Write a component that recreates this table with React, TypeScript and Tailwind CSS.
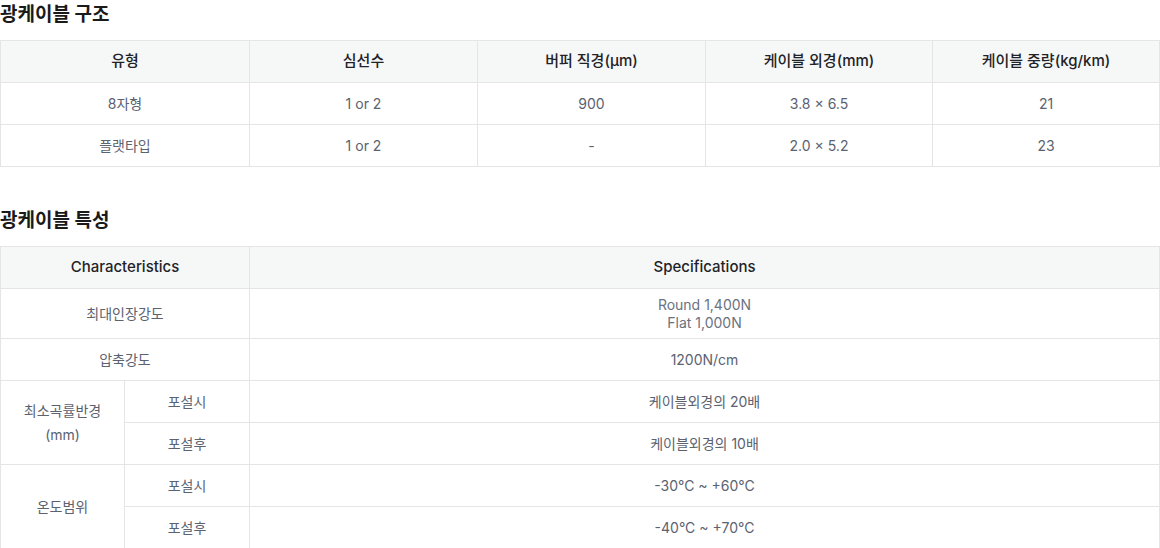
import React from 'react';

const th = 'border border-[#e5e5e5] bg-[#f6f7f7] h-[42px] text-[15px] font-medium text-[#1f2328] text-center';
const td = 'border border-[#e5e5e5] h-[42px] text-[14px] text-[#5b6270] text-center';

const structureRows = [
  ['8자형', '1 or 2', '900', '3.8 × 6.5', '21'],
  ['플랫타입', '1 or 2', '-', '2.0 × 5.2', '23'],
];

export default function App() {
  return (
    <div className="w-[1160px] bg-white" style={{ fontFamily: 'Inter, "Noto Sans CJK KR", sans-serif' }}>
      <h2 className="text-[19px] font-bold leading-[30px] text-[#1a1a1a] mb-[10px]">광케이블 구조</h2>
      <table className="w-full table-fixed border-collapse">
        <colgroup>
          <col className="w-[249px]" />
          <col className="w-[228px]" />
          <col className="w-[228px]" />
          <col className="w-[227px]" />
          <col />
        </colgroup>
        <thead>
          <tr>
            <th className={th}>유형</th>
            <th className={th}>심선수</th>
            <th className={th}>버퍼 직경(μm)</th>
            <th className={th}>케이블 외경(mm)</th>
            <th className={th}>케이블 중량(kg/km)</th>
          </tr>
        </thead>
        <tbody>
          {structureRows.map((row, i) => (
            <tr key={i}>
              {row.map((cell, j) => (
                <td key={j} className={td}>{cell}</td>
              ))}
            </tr>
          ))}
        </tbody>
      </table>

      <h2 className="text-[19px] font-bold leading-[30px] text-[#1a1a1a] mt-[39px] mb-[10px]">광케이블 특성</h2>
      <table className="w-full table-fixed border-collapse">
        <colgroup>
          <col className="w-[124px]" />
          <col className="w-[125px]" />
          <col />
        </colgroup>
        <thead>
          <tr>
            <th colSpan={2} className={th}>Characteristics</th>
            <th className={th}>Specifications</th>
          </tr>
        </thead>
        <tbody>
          <tr>
            <td colSpan={2} className={`${td} h-[50px]`}>최대인장강도</td>
            <td className={`${td} h-[50px] text-[13px] leading-[18px] text-[#6b7280]`}>
              Round 1,400N
              <br />
              Flat 1,000N
            </td>
          </tr>
          <tr>
            <td colSpan={2} className={td}>압축강도</td>
            <td className={td}>1200N/cm</td>
          </tr>
          <tr>
            <td rowSpan={2} className={`${td} leading-[24px]`}>
              최소곡률반경
              <br />
              (mm)
            </td>
            <td className={td}>포설시</td>
            <td className={td}>케이블외경의 20배</td>
          </tr>
          <tr>
            <td className={td}>포설후</td>
            <td className={td}>케이블외경의 10배</td>
          </tr>
          <tr>
            <td rowSpan={2} className={td}>온도범위</td>
            <td className={td}>포설시</td>
            <td className={td}>-30°C ~ +60°C</td>
          </tr>
          <tr>
            <td className={td}>포설후</td>
            <td className={td}>-40°C ~ +70°C</td>
          </tr>
        </tbody>
      </table>
    </div>
  );
}
